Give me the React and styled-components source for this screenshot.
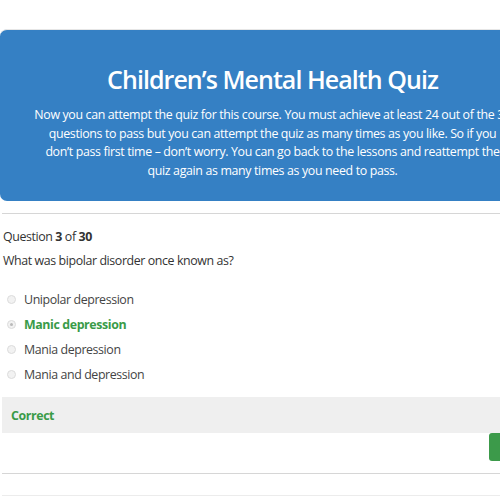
import React from 'react'
import styled, { createGlobalStyle } from 'styled-components'

const GlobalStyle = createGlobalStyle`
    html, body {
        margin: 0;
        padding: 0;
        background: #fff;
        overflow: hidden;
    }
    body {
        font-family: "Open Sans", "Noto Sans", sans-serif;
        color: #333;
        letter-spacing: -0.4px;
    }
`

const Page = styled.div`
    width: 545px;
    padding-top: 29px;
`

const Banner = styled.div`
    background: #3580c4;
    border-top: 1px solid #e6e6e6;
    border-radius: 7px;
    height: 172px;
    box-sizing: border-box;
    padding: 31px 10px 0;
    text-align: center;
    color: #fff;
`

const Title = styled.h1`
    margin: 0 0 9px;
    font-size: 25px;
    font-weight: 600;
    line-height: 36px;
    letter-spacing: -0.95px;
`

const Intro = styled.p`
    margin: 0;
    font-size: 12.4px;
    line-height: 18.5px;
    letter-spacing: -0.35px;
    white-space: nowrap;
`

const Rule = styled.hr`
    border: 0;
    border-top: 1px solid ${p => p.$light ? '#ececec' : '#d6d6d6'};
    margin: ${p => p.$m || '12px 0 0 2px'};
`

const Quiz = styled.div`
    padding: 0 0 0 3px;
`

const Counter = styled.div`
    font-size: 12.4px;
    line-height: 20px;
    margin-top: 13px;
    b { font-weight: 700; }
`

const Question = styled.div`
    font-size: 12.4px;
    line-height: 20px;
    margin-top: 4px;
`

const Options = styled.ul`
    list-style: none;
    margin: 16px 0 0;
    padding: 0;
`

const Option = styled.li`
    display: flex;
    align-items: center;
    height: 25px;
    gap: 8px;
    padding-left: 4px;
    font-size: 12.4px;
    color: ${p => p.$correct ? '#3a9b48' : '#444'};
    font-weight: ${p => p.$correct ? 700 : 400};
`

const Radio = styled.span`
    width: 7px;
    height: 7px;
    border-radius: 50%;
    border: 1px solid #dcdcdc;
    background: #f2f2f2;
    position: relative;
    flex-shrink: 0;
    &::after {
        content: '';
        display: ${p => p.$checked ? 'block' : 'none'};
        position: absolute;
        inset: 2px;
        border-radius: 50%;
        background: #b9b9b9;
    }
`

const Feedback = styled.div`
    margin: 10px 0 0 2px;
    background: #efefef;
    height: 36px;
    display: flex;
    align-items: center;
    padding-left: 9px;
    font-size: 12.4px;
    font-weight: 700;
    color: #3a9b48;
`

const Actions = styled.div`
    display: flex;
    padding-left: 489px;
    height: 28px;
`

const NextButton = styled.button`
    width: 56px;
    height: 28px;
    border: 0;
    border-radius: 3px;
    background: #3c9a4a;
    color: #fff;
    flex-shrink: 0;
`

const options = [
    'Unipolar depression',
    'Manic depression',
    'Mania depression',
    'Mania and depression',
]

export default function App() {
    return (
        <>
            <GlobalStyle />
            <Page>
                <Banner>
                    <Title>Children’s Mental Health Quiz</Title>
                    <Intro>
                        Now you can attempt the quiz for this course. You must achieve at least 24 out of the 30<br />
                        questions to pass but you can attempt the quiz as many times as you like. So if you<br />
                        don’t pass first time – don’t worry. You can go back to the lessons and reattempt the<br />
                        quiz again as many times as you need to pass.
                    </Intro>
                </Banner>
                <Rule $m="12px 0 0 2px" />
                <Quiz>
                    <Counter>Question <b>3</b> of <b>30</b></Counter>
                    <Question>What was bipolar disorder once known as?</Question>
                    <Options>
                        {options.map(o => (
                            <Option key={o} $correct={o === 'Manic depression'}>
                                <Radio $checked={o === 'Manic depression'} />
                                {o}
                            </Option>
                        ))}
                    </Options>
                </Quiz>
                <Feedback>Correct</Feedback>
                <Actions>
                    <NextButton />
                </Actions>
                <Rule $m="12px 0 0 2px" />
                <Rule $light $m="21px 0 0 2px" />
            </Page>
        </>
    )
}
